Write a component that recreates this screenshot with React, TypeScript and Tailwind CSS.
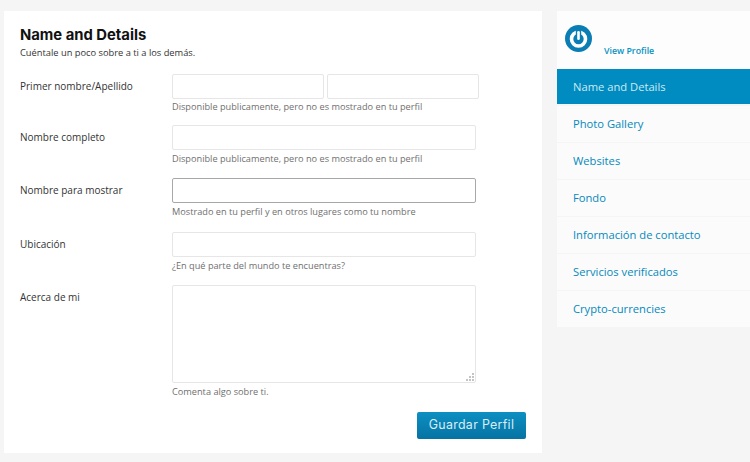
const navItems = [
  "Photo Gallery",
  "Websites",
  "Fondo",
  "Información de contacto",
  "Servicios verificados",
  "Crypto-currencies",
];

const inputClass = "h-[25px] rounded-[2px] border border-[#e6e6e6] bg-white";

function Hint({ children, className = "mt-[2px]" }: { children: string; className?: string }) {
  return <p className={`${className} text-[9.2px] leading-[14px] text-[#6f6f6f]`}>{children}</p>;
}

function Row({ label, className, children }: { label: string; className: string; children: React.ReactNode }) {
  return (
    <div className={`flex ${className}`}>
      <label className="w-[152px] shrink-0 pt-[5px] text-[10px] leading-[15px] text-[#333]">{label}</label>
      <div>{children}</div>
    </div>
  );
}

export default function App() {
  return (
    <div className="flex h-[462px] w-[750px] overflow-hidden bg-[#f5f5f5] pl-[4px] pt-[11px] font-['Open_Sans',sans-serif]">
      <main className="h-[442px] w-[538px] shrink-0 bg-white pl-[16px] pt-[15px]">
        <h1 className="font-['Inter',sans-serif] text-[14.8px] font-bold leading-[18px] text-[#111]">Name and Details</h1>
        <p className="mt-[2px] text-[9.3px] leading-[14px] text-[#333]">Cuéntale un poco sobre a ti a los demás.</p>

        <Row label="Primer nombre/Apellido" className="mt-[14px]">
          <div className="flex gap-[3px]">
            <div className={`${inputClass} w-[152px]`} />
            <div className={`${inputClass} w-[152px]`} />
          </div>
          <Hint className="mt-[1px]">Disponible publicamente, pero no es mostrado en tu perfil</Hint>
        </Row>

        <Row label="Nombre completo" className="mt-[11px]">
          <div className={`${inputClass} w-[304px]`} />
          <Hint>Disponible publicamente, pero no es mostrado en tu perfil</Hint>
        </Row>

        <Row label="Nombre para mostrar" className="mt-[12px]">
          <div className="h-[25px] w-[304px] rounded-[2px] border border-[#a8a8a8] bg-white" />
          <Hint>Mostrado en tu perfil y en otros lugares como tu nombre</Hint>
        </Row>

        <Row label="Ubicación" className="mt-[13px]">
          <div className={`${inputClass} w-[304px]`} />
          <Hint>¿En qué parte del mundo te encuentras?</Hint>
        </Row>

        <Row label="Acerca de mi" className="mt-[12px]">
          <div className="relative">
            <textarea className="block h-[98px] w-[304px] resize-none rounded-[2px] border border-[#e6e6e6] bg-white" />
            <svg className="absolute bottom-[1px] right-[1px]" width="10" height="10" viewBox="0 0 10 10" fill="#c4c4c4">
              <rect x="7" y="1" width="2" height="2" />
              <rect x="4" y="4" width="2" height="2" />
              <rect x="7" y="4" width="2" height="2" />
              <rect x="1" y="7" width="2" height="2" />
              <rect x="4" y="7" width="2" height="2" />
              <rect x="7" y="7" width="2" height="2" />
            </svg>
          </div>
          <Hint>Comenta algo sobre ti.</Hint>
        </Row>

        <div className="mt-[13px] flex w-[506px] justify-end">
          <button className="h-[27px] w-[109px] rounded-[2px] bg-gradient-to-b from-[#0d8fc2] to-[#0673a3] font-['Inter',sans-serif] text-[12.4px] tracking-[0.3px] text-[#d8eef7]">
            Guardar Perfil
          </button>
        </div>
      </main>

      <aside className="ml-[15px] w-[193px] shrink-0">
        <div className="flex h-[58px] items-start bg-[#fdfdfd] pl-[8px] pt-[14px]">
          <svg width="27" height="27" viewBox="0 0 27 27">
            <circle cx="13.5" cy="13.5" r="13.5" fill="#0a7db4" />
            <circle cx="13.5" cy="14" r="7" fill="none" stroke="#fff" strokeWidth="3.6" />
            <rect x="10.8" y="4" width="5.4" height="10" fill="#0a7db4" />
            <rect x="12.2" y="6" width="2.6" height="9" rx="1.3" fill="#fff" />
          </svg>
          <a className="ml-[12px] mt-[20px] text-[8.8px] font-semibold leading-[13px] text-[#0792c2]">View Profile</a>
        </div>
        <div className="flex h-[35px] items-center bg-[#008cc0] pl-[16px] pt-[1px] text-[11.2px] text-[#cfe9f4]">Name and Details</div>
        <nav className="mt-[2px] flex flex-col gap-[1px]">
          {navItems.map((item) => (
            <a key={item} className="flex h-[36px] items-center bg-[#fbfbfb] pl-[16px] text-[11.2px] font-medium text-[#0689bb]">
              {item}
            </a>
          ))}
        </nav>
      </aside>
    </div>
  );
}
